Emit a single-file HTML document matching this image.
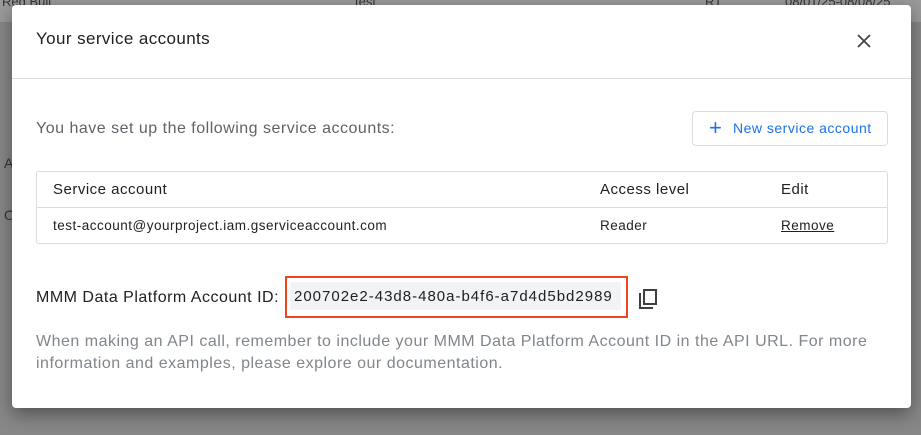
<!DOCTYPE html>
<html><head><style>
body{margin:0;width:921px;height:435px;background:#878787;position:relative;overflow:hidden;font-family:"Liberation Sans",sans-serif}
.bg{position:absolute;top:0;left:0;right:0;height:22px;background:#9a9a9a;font-size:13px;color:#333}
.bg span{position:absolute;top:-6px}
.dlg{position:absolute;left:12px;top:5px;width:899px;height:403px;background:#fff;border-radius:4px;box-shadow:0 6px 18px rgba(0,0,0,.4)}
.t{position:absolute;left:24px;top:24px;font-size:17px;letter-spacing:.4px;color:#202124}
.hr{position:absolute;left:0;right:0;top:73px;border-top:1px solid #dadce0}
.sub{position:absolute;left:24px;top:115px;font-size:16px;letter-spacing:.5px;color:#5f6368}
.btn{position:absolute;left:680px;top:106px;width:196px;height:35px;border:1px solid #dadce0;border-radius:4px;color:#1a73e8;font-size:14px;letter-spacing:.5px;line-height:33px;box-sizing:border-box;padding-left:40px}
.btn b{position:absolute;left:16px;top:-1px;font-size:22px;font-weight:normal}
.tbl{position:absolute;left:24px;top:166px;width:852px;height:73px;border:1px solid #dadce0;border-radius:3px;box-sizing:border-box;font-size:14px;color:#202124}
.tbl .r2{position:absolute;top:35px;left:0;right:0;border-top:1px solid #dadce0}
.c{position:absolute}
.h{font-size:15px;letter-spacing:.5px}
.d{font-size:13.5px;letter-spacing:.5px}
.id{position:absolute;left:24px;top:284px;font-size:16px;letter-spacing:.5px;color:#202124}
.box{position:absolute;left:273px;top:271px;width:343px;height:42px;border:2px solid #f0441c;box-sizing:border-box}
.box div{position:absolute;left:3px;top:4px;right:5px;bottom:6px;background:#f1f3f4;font-size:15px;line-height:30px;padding-left:4px;color:#202124;letter-spacing:1px}
.note{position:absolute;left:24px;top:326px;width:850px;font-size:16px;letter-spacing:.5px;line-height:22px;color:#80868b}
</style></head><body>
<div class="bg"><span style="left:2px">Red Bull</span><span style="left:355px">test</span><span style="left:705px">RT</span><span style="left:785px">08/01/25-08/08/25</span></div>
<div style="position:absolute;left:4px;top:155px;font-size:14px;color:#333">A</div>
<div style="position:absolute;left:4px;top:207px;font-size:14px;color:#333">O</div>
<div class="dlg">
<div class="t">Your service accounts</div>
<svg style="position:absolute;left:845px;top:29px" width="14" height="14" viewBox="0 0 14 14"><path d="M1 1L13 13M13 1L1 13" stroke="#444" stroke-width="1.8"/></svg>
<div class="hr"></div>
<div class="sub">You have set up the following service accounts:</div>
<div class="btn"><b>+</b>New service account</div>
<div class="tbl">
<div class="c h" style="left:16px;top:9px">Service account</div>
<div class="c h" style="left:563px;top:9px">Access level</div>
<div class="c h" style="left:744px;top:9px">Edit</div>
<div class="r2"></div>
<div class="c d" style="left:16px;top:46px">test-account@yourproject.iam.gserviceaccount.com</div>
<div class="c d" style="left:563px;top:46px">Reader</div>
<div class="c d" style="left:744px;top:46px;text-decoration:underline">Remove</div>
</div>
<div class="id">MMM Data Platform Account ID:</div>
<div class="box"><div>200702e2-43d8-480a-b4f6-a7d4d5bd2989</div></div>
<svg style="position:absolute;left:626px;top:283px" width="22" height="24" viewBox="0 0 22 24"><rect x="6" y="2" width="12" height="14" fill="none" stroke="#3c4043" stroke-width="2"/><path d="M2 5V20H15" fill="none" stroke="#3c4043" stroke-width="2"/></svg>
<div class="note">When making an API call, remember to include your MMM Data Platform Account ID in the API URL. For more information and examples, please explore our documentation.</div>
</div>
</body></html>
